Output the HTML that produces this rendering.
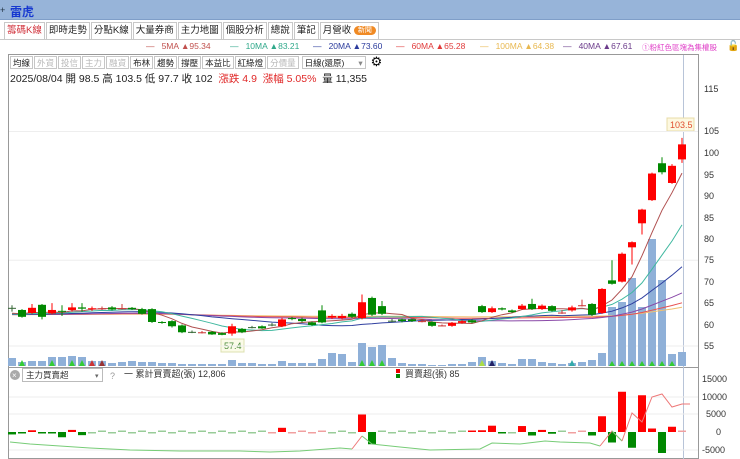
<!DOCTYPE html>
<html><head><meta charset="utf-8">
<style>
*{margin:0;padding:0;box-sizing:border-box}
body{width:740px;height:459px;overflow:hidden;background:#fff;font-family:"Liberation Sans","Noto Sans CJK TC",sans-serif;position:relative}
.top{position:absolute;left:0;top:0;width:740px;height:20px;background:#97b4d9;border-bottom:1px solid #7f9ec8}
.top .t{position:absolute;left:10px;top:3px;font-size:12px;font-weight:bold;color:#1638d0}
.top .p{position:absolute;left:0;top:5px;font-size:9px;color:#234}
.tabs{position:absolute;left:4px;top:22px;height:17px;display:flex}
.tab{font-size:9.5px;color:#222;border:1px solid #c8c8c8;border-bottom:none;height:17px;line-height:16px;padding:0 2px;margin-right:1px;background:#fff;white-space:nowrap}
.tab.a{color:#d0303a}
.badge{display:inline-block;background:#f08a24;color:#fff;border-radius:6px;font-size:7px;line-height:9px;padding:0 4px;vertical-align:1px}
.tline{position:absolute;left:0;top:39px;width:740px;height:1px;background:#c8c8c8}
.leg{position:absolute;top:41px;font-size:8.5px;white-space:nowrap}
.tb{position:absolute;left:10px;top:56px;display:flex;height:14px}
.b{font-size:8.5px;border:1px solid #c6c6c6;height:13px;line-height:12px;padding:0 2px;margin-right:1px;color:#222;background:#fff}
.b.g{color:#b8b8b8}
.info{position:absolute;left:10px;top:71px;font-size:10.5px;color:#222;white-space:nowrap}
.info .r{color:#e02828}
svg{position:absolute;left:0;top:0}
</style></head><body>
<div class="top"><span class="p">+</span><span class="t">雷虎</span></div>
<div class="tabs">
<div class="tab a">籌碼K線</div><div class="tab">即時走勢</div><div class="tab">分點K線</div><div class="tab">大量券商</div><div class="tab">主力地圖</div><div class="tab">個股分析</div><div class="tab">總說</div><div class="tab">筆記</div><div class="tab">月營收 <span class="badge">新聞</span></div>
</div>
<div class="tline"></div>
<div class="leg" style="left:146px;color:#c0504d">—&nbsp;&nbsp; 5MA ▲95.34</div>
<div class="leg" style="left:230px;color:#2fa88a">—&nbsp;&nbsp; 10MA ▲83.21</div>
<div class="leg" style="left:313px;color:#2a3a9c">—&nbsp;&nbsp; 20MA ▲73.60</div>
<div class="leg" style="left:396px;color:#e03a3a">—&nbsp;&nbsp; 60MA ▲65.28</div>
<div class="leg" style="left:480px;color:#e8b850">—&nbsp;&nbsp; 100MA ▲64.38</div>
<div class="leg" style="left:563px;color:#6a3a8a">—&nbsp;&nbsp; 40MA ▲67.61</div>
<div class="leg" style="left:642px;color:#e040c8;font-size:7.5px;top:42px">①粉紅色區塊為集權股</div>
<div class="leg" style="left:727px;color:#000;font-size:10px">🔓</div>
<div class="tb">
<div class="b">均線</div><div class="b g">外資</div><div class="b g">投信</div><div class="b g">主力</div><div class="b g">融資</div><div class="b">布林</div><div class="b">趨勢</div><div class="b">撐壓</div><div class="b">本益比</div><div class="b">紅綠燈</div><div class="b g">分價量</div><div class="b" style="width:64px;margin-left:2px">日線(還原) <span style="float:right;color:#888">▾</span></div><div style="font-size:13px;line-height:12px;margin-left:4px">⚙</div>
</div>
<div class="info">2025/08/04 開 98.5 高 103.5 低 97.7 收 102 &nbsp;<span class="r">漲跌 4.9 &nbsp;漲幅 5.05%</span> &nbsp;量 11,355</div>
<svg id="c" width="740" height="459" xmlns="http://www.w3.org/2000/svg" font-family="Liberation Sans, sans-serif">
<rect x="8.5" y="54.5" width="690" height="404" fill="none" stroke="#999"/>
<line x1="8" y1="367.5" x2="699" y2="367.5" stroke="#999"/>
<line x1="683.5" y1="55" x2="683.5" y2="459" stroke="#b8c4d8"/>
<g font-size="9" fill="#333">
<text x="704" y="92">115</text><text x="704" y="134">105</text><text x="704" y="156">100</text><text x="704" y="178">95</text><text x="704" y="199">90</text><text x="704" y="221">85</text><text x="704" y="242">80</text><text x="704" y="263">75</text><text x="704" y="285">70</text><text x="704" y="306">65</text><text x="704" y="328">60</text><text x="704" y="349">55</text>
<text x="702" y="382">15000</text><text x="702" y="400">10000</text><text x="706" y="417">5000</text><text x="716" y="435">0</text><text x="702" y="453">-5000</text>
</g>
<rect x="667" y="118" width="27" height="13" fill="#fdf8e0" stroke="#e8dca8"/>
<text x="670" y="128" font-size="9" fill="#e05030">103.5</text>
<rect x="221" y="339" width="23" height="13" fill="#fbfbe8" stroke="#dde0b0"/>
<text x="224" y="349" font-size="9" fill="#4a8a3a">57.4</text>
<circle cx="15" cy="375" r="5" fill="#aaa"/><text x="12" y="378" font-size="8" fill="#fff">×</text>
<rect x="22.5" y="368.5" width="80" height="13" fill="#fff" stroke="#bbb"/>
<text x="26" y="378" font-size="8.5" fill="#333" font-family="Liberation Sans, Noto Sans CJK TC, sans-serif">主力買賣超</text>
<text x="95" y="378" font-size="7" fill="#666">▾</text>
<text x="110" y="379" font-size="9" fill="#999">?</text>
<text x="124" y="377" font-size="9" fill="#333" font-family="Liberation Sans, Noto Sans CJK TC, sans-serif">一 累計買賣超(張) 12,806</text>
<rect x="396" y="369" width="4" height="4" fill="#e00"/><rect x="396" y="374" width="4" height="4" fill="#080"/>
<text x="405" y="377" font-size="9" fill="#333" font-family="Liberation Sans, Noto Sans CJK TC, sans-serif">買賣超(張) 85</text>
<g id="g"></g>
</svg>
<script>
var C=[[63.9,63.9,64.5,63],[63.4,61.8,63.6,61.6],[62.7,63.9,64.8,62.5],[64.6,61.8,64.8,61.2],[62.6,63.4,65,62.4],[63.2,63,64.5,62],[63.4,64,65,63],[64,63.7,65,63],[63.6,63.8,64.2,63.2],[63.8,63.8,64.2,63.4],[64,63.5,64.3,63.3],[63.8,63.8,64.8,63.5],[63.9,63.6,64.1,63.4],[63.6,62.5,63.9,62.3],[63.6,60.6,63.8,60.4],[60.6,60.4,60.8,60.2],[60.8,59.6,61,59.3],[59.8,58.2,60,58],[58.3,58.3,58.6,58],[58.2,58.2,58.5,57.9],[58.3,57.7,58.5,57.6],[58,57.6,58.2,57.5],[57.9,59.6,60.2,57.4],[59,58.2,59.2,58],[59.4,59.4,59.7,59.1],[59.6,59.1,59.8,59],[60,60,60.4,59.6],[59.6,61.2,61.6,59.4],[61.5,61.3,61.8,61],[61.3,60.8,61.6,60.5],[60.5,59.9,60.7,59.7],[63.3,60.5,64.5,60.3],[61.6,62,62.4,61.3],[61.5,62,62.5,61.2],[62.5,61.8,62.8,61.5],[61.5,65.2,67,61.2],[66.2,62.3,66.5,62],[64.3,62.5,65.5,62.2],[60.9,60.9,61.3,60.5],[61.2,60.8,61.4,60.5],[61.2,60.8,61.3,60.6],[60.8,60.8,61.2,60.5],[60.6,59.7,60.8,59.5],[59.8,59.8,60,59.6],[59.7,60.4,60.6,59.5],[60.4,60.8,61,60.2],[61,60.5,61.2,60.3],[64.3,62.9,64.6,62.7],[62.9,63.8,64.2,62.7],[63.8,63.5,64,63.3],[63.3,62.9,63.5,62.7],[63.6,64.4,64.8,63.4],[64.8,63.6,66,63.4],[63.6,64.4,64.7,63.4],[64.3,63.2,64.5,63],[62.8,62.8,63.4,62.5],[63.3,64,64.4,63],[64.5,64.5,65.8,64.2],[64.8,62.3,65,62],[62.7,68.3,68.5,62.5],[70.3,69.5,75,69.3],[70,76.5,76.8,69.8],[78,79.2,79.4,74],[83.6,86.8,87,81],[89,95.2,95.4,88.8],[97.6,95.5,99,95],[93,97,97.4,92.8],[98.5,102,103.5,97.7]];
var V={0:8,1:4,2:5,3:5,4:9,5:9,6:10,7:9,8:5,9:5,10:3,11:4,12:5,13:4,14:4,15:3,16:3,17:2,18:2,19:2,20:2,21:2,22:6,23:3,24:3,25:2,26:2,27:5,28:3,29:3,30:3,31:7,32:13,33:12,34:4,35:23,36:19,37:21,38:8,39:3,40:2,41:2,42:1,43:1,44:2,45:2,46:4,47:9,48:5,49:3,50:2,51:7,52:7,53:4,54:3,55:2,56:3,57:4,58:6,59:13,60:59,61:64,62:88,63:59,64:127,65:86,66:12,67:14};
var L={0:-.7,1:-.3,2:.5,3:-.3,4:-.3,5:-1.5,6:.6,7:-.9,27:1.2,35:5,36:-3.5,46:.4,47:.5,48:1.8,49:-.4,51:1.7,52:-1,53:.6,54:-.5,58:-1,59:4.5,60:-3,61:11.5,62:-4.5,63:10.5,64:1,65:-6,66:1.5};
var s='',X=i=>12+i*10,Y=p=>346-(p-55)*4.29;
[[105],[75],[55]].forEach(p=>s+='<line x1="9" x2="698" y1="'+Y(p[0])+'" y2="'+Y(p[0])+'" stroke="#eee"/>');
s+='<line x1="9" x2="698" y1="397" y2="397" stroke="#eee"/><line x1="9" x2="698" y1="414" y2="414" stroke="#eee"/><line x1="9" x2="698" y1="450" y2="450" stroke="#eee"/>';
C.forEach((c,i)=>{var h=V[i]||3;s+='<rect x="'+(X(i)-4)+'" y="'+(366-h)+'" width="8" height="'+h+'" fill="#8fb0d8"/>';if(i>=60&&i<=66)s+='<polygon points="'+(X(i)-3)+',366 '+(X(i)+3)+',366 '+X(i)+',361" fill="#3c3"/>';});
[[1,'#3c3'],[4,'#3c3'],[6,'#3c3'],[7,'#3c3'],[8,'#c33'],[9,'#933'],[35,'#3c3'],[36,'#3c3'],[37,'#3c3'],[47,'#ad4'],[48,'#226'],[56,'#3aa']].forEach(t=>{var x=X(t[0]);s+='<polygon points="'+(x-3)+',366 '+(x+3)+',366 '+x+',360" fill="'+t[1]+'"/>'});
var cl=C.map(c=>c[1]);
function ma(n,col){var a=[];for(var i=0;i<C.length;i++){var sm=0;for(var k=i-n+1;k<=i;k++)sm+=k<0?62.3:cl[k];a.push(X(i)+','+Y(sm/n).toFixed(1));}s+='<polyline points="'+a.join(' ')+'" fill="none" stroke="'+col+'" stroke-width="1"/>';}
ma(100,'#f0c070');ma(60,'#e85050');ma(40,'#8a4aa8');ma(20,'#3040a0');ma(10,'#40b8a0');ma(5,'#b05050');
C.forEach((c,i)=>{var x=X(i),o=c[0],cc=c[1],up=cc>=o,col=Math.abs(cc-o)<.15?'#888':(up?'#f00':'#080');if(Math.abs(cc-o)<.15)col=i%2?'#c33':'#363';var t=Y(Math.max(o,cc)),b=Y(Math.min(o,cc));s+='<line x1="'+x+'" x2="'+x+'" y1="'+Y(c[2])+'" y2="'+Y(c[3])+'" stroke="'+col+'"/>';s+='<rect x="'+(x-4)+'" y="'+t+'" width="8" height="'+Math.max(1,b-t)+'" fill="'+col+'"/>';});
C.forEach((c,i)=>{var v=L[i]===undefined?(i%2?.15:-.15):L[i],x=X(i);var y0=432,h=Math.max(1.5,Math.abs(v)*3.5),y=v>=0?y0-h:y0;var col=v>=0?'#f00':'#080';if(L[i]===undefined)col=i>55||(i>25&&i<32)?'#f0a0a0':'#9c9';s+='<rect x="'+(x-4)+'" y="'+y+'" width="8" height="'+h+'" fill="'+col+'"/>';});
var gl=[[10,442],[30,444],[60,446],[90,448],[130,450],[180,451],[240,451],[270,452],[300,451],[340,448],[352,449]];
s+='<polyline points="'+gl.join(' ')+'" fill="none" stroke="#7c7"/>';
s+='<polyline points="352,449 362,436" fill="none" stroke="#e77"/>';
s+='<polyline points="362,436 372,444 400,447 430,450 480,449 492,443 520,444 545,441 560,442 590,443 600,446" fill="none" stroke="#7c7"/>';
s+='<polyline points="600,446 612,431 622,441" fill="none" stroke="#e77"/><polyline points="612,431 622,441" fill="none" stroke="#7c7"/>';
s+='<polyline points="622,441 632,413 642,422 652,397 662,394 672,407 682,404 690,404" fill="none" stroke="#e77"/>';
document.getElementById('g').innerHTML=s;
</script>
</body></html>
